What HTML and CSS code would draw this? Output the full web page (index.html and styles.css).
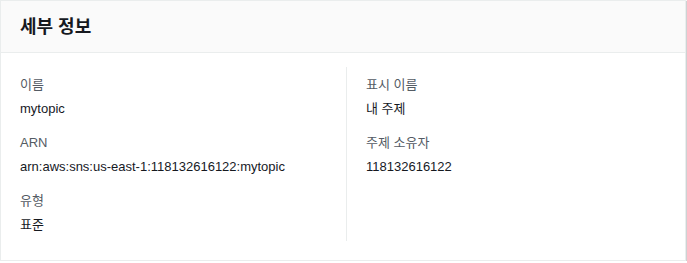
FILE: index.html
```html
<!DOCTYPE html>
<html lang="ko">
<head>
<meta charset="utf-8">
<link rel="stylesheet" href="styles.css">
</head>
<body>
<div class="card">
  <div class="card-header"><h2 class="title">세부 정보</h2></div>
  <div class="card-body">
    <div class="col">
      <div class="item"><div class="label">이름</div><div class="value">mytopic</div></div>
      <div class="item"><div class="label">ARN</div><div class="value">arn:aws:sns:us-east-1:118132616122:mytopic</div></div>
      <div class="item"><div class="label">유형</div><div class="value">표준</div></div>
    </div>
    <div class="col col-right">
      <div class="item"><div class="label">표시 이름</div><div class="value">내 주제</div></div>
      <div class="item"><div class="label">주제 소유자</div><div class="value">118132616122</div></div>
    </div>
  </div>
</div>
</body>
</html>
```
FILE: styles.css
```css
html, body { margin: 0; padding: 0; background: #ffffff; }
body {
  font-family: "Liberation Sans", "Noto Sans CJK KR", sans-serif;
  font-size: 13px;
  line-height: 22px;
  color: #16191f;
}
.card {
  width: 684px;
  background: #ffffff;
  border: 1px solid #eaeded;
  box-shadow: 0 1px 1px 0 rgba(0,28,36,0.3), 1px 1px 1px 0 rgba(0,28,36,0.15), -1px 1px 1px 0 rgba(0,28,36,0.15);
  display: flex;
  flex-direction: column;
}
.card-header {
  flex-shrink: 0;
  box-sizing: border-box;
  background: #fafafa;
  border-bottom: 1px solid #eaeded;
  height: 52px;
  display: flex;
  align-items: center;
  padding: 1px 19px 0 19px;
}
.title {
  margin: 0;
  font-size: 18px;
  font-weight: 700;
  line-height: 26px;
  color: #16191f;
}
.card-body {
  display: grid;
  grid-template-columns: 345px 1fr;
  padding: 14px 0 19px 0;
}
.col {
  display: flex;
  flex-direction: column;
  gap: 12px;
  padding: 7px 19px 5px 19px;
}
.col-right {
  border-left: 1px solid #eaeded;
  padding-left: 19px;
}
.label { color: #545b64; }
.value { color: #16191f; margin-top: 2px; }
```
